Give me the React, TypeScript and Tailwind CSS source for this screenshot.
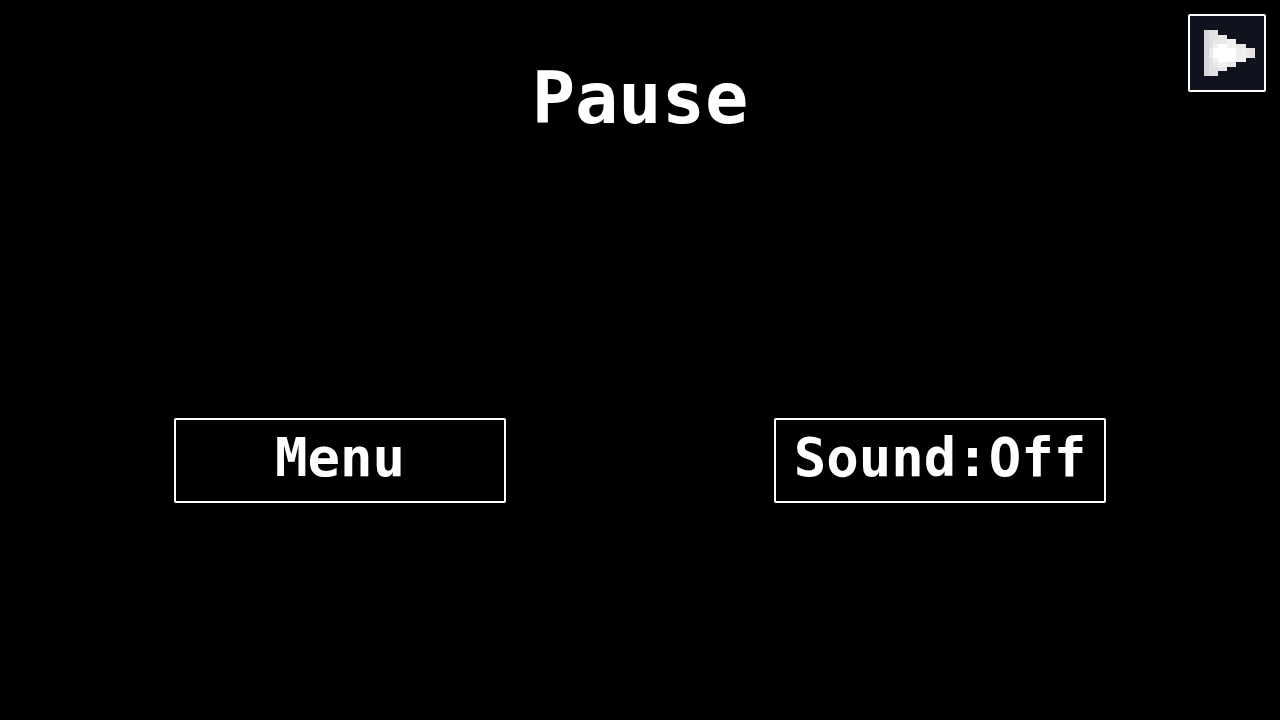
import React, { useState } from 'react';

interface MenuButtonProps {
  label: string;
  onClick: () => void;
}

// One string per row of the sprite, each letter is a shade
const PLAY_SPRITE = [
  'abb........',
  'abbcc......',
  'abcccdd....',
  'abdffddcc..',
  'acfffffedcb',
  'acfffffedcb',
  'abdffffdd..',
  'abcddcc....',
  'abbcc......',
  'abb........',
];

const SHADES: Record<string, string> = {
  a: '#d6d4d4',
  b: '#e2e0e1',
  c: '#e9e7e8',
  d: '#f2f0f1',
  e: '#eeecec',
  f: '#ffffff',
};

const PlayIcon: React.FC = () => (
  <svg viewBox="0 0 11 10" className="w-[51px] h-[46px]" shapeRendering="crispEdges" aria-hidden="true">
    {PLAY_SPRITE.map((row, y) =>
      row.split('').map((cell, x) =>
        SHADES[cell] ? <rect key={`${x}-${y}`} x={x} y={y} width="1" height="1" fill={SHADES[cell]} /> : null
      )
    )}
  </svg>
);

const MenuButton: React.FC<MenuButtonProps> = ({ label, onClick }) => (
  <button
    type="button"
    onClick={onClick}
    className="w-full max-w-[332px] h-[85px] flex items-center justify-center border-2 border-white rounded-xs bg-black pb-1 text-[54px] leading-none font-bold whitespace-nowrap hover:bg-[#10131d]"
  >
    {label}
  </button>
);

const App: React.FC = () => {
  const [paused, setPaused] = useState(true);
  const [sound, setSound] = useState(false);

  return (
    <main className="min-h-screen flex flex-col bg-black text-white font-['DejaVu_Sans_Mono',monospace]">
      <header className="grid grid-cols-[1fr_auto_1fr] items-start p-3.5">
        <h1 className="col-start-2 pt-12 text-[72px] leading-none font-bold">Pause</h1>
        <button
          type="button"
          aria-label="Resume"
          aria-pressed={!paused}
          onClick={() => setPaused(!paused)}
          className="justify-self-end size-[78px] flex items-center justify-center border-2 border-white rounded-xs bg-[#10131d] pl-1"
        >
          <PlayIcon />
        </button>
      </header>

      <nav className="flex-1 grid grid-cols-2 justify-items-center items-center px-10 pt-13">
        <MenuButton label="Menu" onClick={() => setPaused(true)} />
        <MenuButton label={sound ? 'Sound:On' : 'Sound:Off'} onClick={() => setSound(!sound)} />
      </nav>
    </main>
  );
};

export default App;
